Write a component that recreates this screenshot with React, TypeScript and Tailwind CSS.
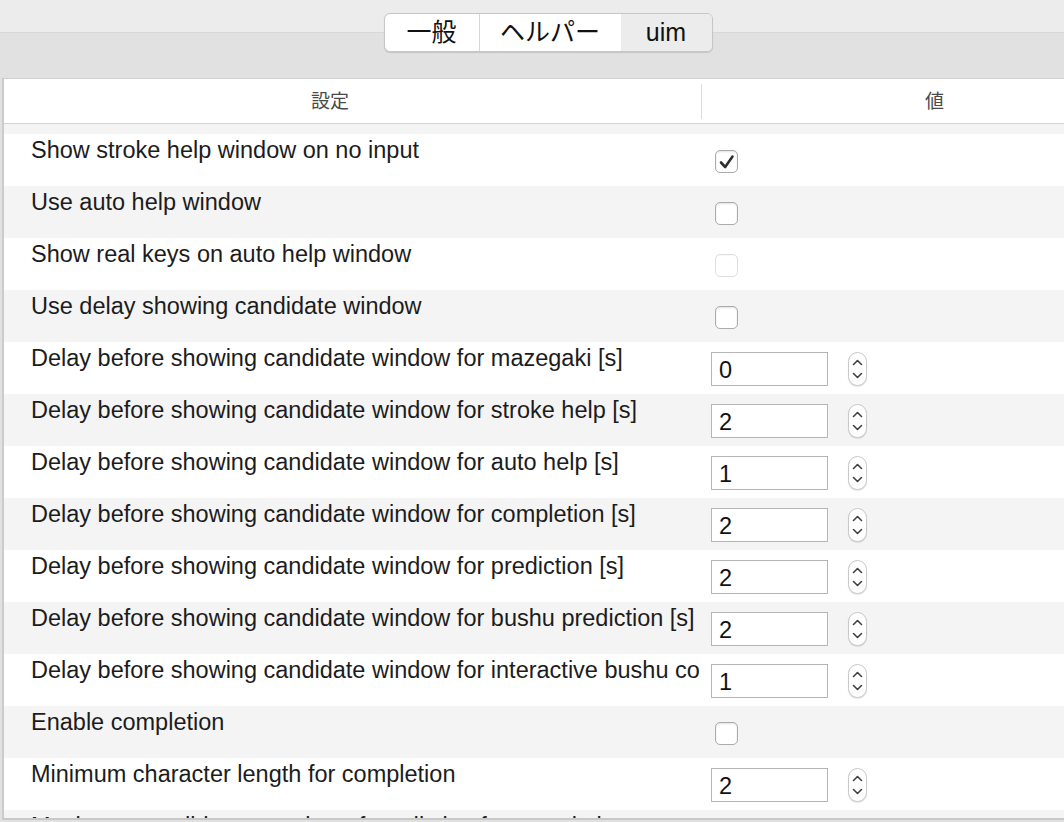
import React from "react";

type Row =
  | { label: string; kind: "check"; checked?: boolean; disabled?: boolean }
  | { label: string; kind: "num"; value: string };

const rows: Row[] = [
  { label: "Show stroke help window on no input", kind: "check", checked: true },
  { label: "Use auto help window", kind: "check" },
  { label: "Show real keys on auto help window", kind: "check", disabled: true },
  { label: "Use delay showing candidate window", kind: "check" },
  { label: "Delay before showing candidate window for mazegaki [s]", kind: "num", value: "0" },
  { label: "Delay before showing candidate window for stroke help [s]", kind: "num", value: "2" },
  { label: "Delay before showing candidate window for auto help [s]", kind: "num", value: "1" },
  { label: "Delay before showing candidate window for completion [s]", kind: "num", value: "2" },
  { label: "Delay before showing candidate window for prediction [s]", kind: "num", value: "2" },
  { label: "Delay before showing candidate window for bushu prediction [s]", kind: "num", value: "2" },
  { label: "Delay before showing candidate window for interactive bushu conversion [s]", kind: "num", value: "1" },
  { label: "Enable completion", kind: "check" },
  { label: "Minimum character length for completion", kind: "num", value: "2" },
  { label: "Maximum candidates number of prediction for completion", kind: "num", value: "5" },
];

function Checkbox({ checked, disabled }: { checked?: boolean; disabled?: boolean }) {
  return (
    <div
      className={
        "ml-[14px] mt-[16px] w-[23px] h-[23px] rounded-[5px] bg-white border " +
        (disabled
          ? "border-[#dedede] shadow-[inset_0_1px_1px_rgba(0,0,0,0.03)]"
          : "border-[#ababab] shadow-[inset_0_1px_2px_rgba(0,0,0,0.12)]")
      }
    >
      {checked && (
        <svg width="21" height="21" viewBox="0 0 21 21" className="block">
          <path d="M5 11.5 L9.2 16 L16.5 5.5" fill="none" stroke="#2e2e2e" strokeWidth="2.6" strokeLinecap="round" strokeLinejoin="round" />
        </svg>
      )}
    </div>
  );
}

function NumField({ value }: { value: string }) {
  return (
    <div className="ml-[10px] mt-[10px] flex items-center">
      <div className="w-[117px] h-[34px] border border-[#b5b5b5] bg-white pl-[7px] pt-[4px] text-[23.5px] leading-[27px] text-[#111]">
        {value}
      </div>
      <div className="ml-[20px] w-[19px] h-[34px] rounded-full border border-[#c9c9c9] bg-white shadow-[0_1px_1px_rgba(0,0,0,0.12)] flex flex-col items-center justify-between py-[6px]">
        <svg width="11" height="7" viewBox="0 0 11 7" className="block">
          <path d="M1.5 5.5 L5.5 1.5 L9.5 5.5" fill="none" stroke="#404040" strokeWidth="1.6" strokeLinecap="round" strokeLinejoin="round" />
        </svg>
        <svg width="11" height="7" viewBox="0 0 11 7" className="block">
          <path d="M1.5 1.5 L5.5 5.5 L9.5 1.5" fill="none" stroke="#404040" strokeWidth="1.6" strokeLinecap="round" strokeLinejoin="round" />
        </svg>
      </div>
    </div>
  );
}

export default function App() {
  return (
    <div className="w-[1064px] h-[822px] overflow-hidden bg-[#e1e1e1] font-['Liberation_Sans','Noto_Sans_CJK_JP',sans-serif]">
      {/* toolbar */}
      <div className="h-[78px] bg-[linear-gradient(to_bottom,#ececec_0px,#ececec_32px,#d7d7d7_32px,#d7d7d7_33px,#e1e1e1_33px)] pt-[13px] flex justify-center">
        <div className="h-[39px] ml-[32px] flex rounded-[6px] border border-[#c6c6c6] bg-white shadow-[0_1px_1px_rgba(0,0,0,0.13)] overflow-hidden text-[25px] text-[#111] leading-none">
          <div className="w-[95px] flex items-center justify-center border-r border-[#d6d6d6]">一般</div>
          <div className="w-[141px] flex items-center justify-center">ヘルパー</div>
          <div className="w-[91px] flex items-center justify-center bg-[#ececec]">uim</div>
        </div>
      </div>
      {/* table */}
      <div className="ml-[2px] flex flex-col border-l-2 border-l-[#cbcbcb]">
        <div className="h-px bg-[#d2d2d2]" />
        <div className="h-[739px] bg-white overflow-hidden">
          <div className="h-[45px] flex items-center text-[19px] leading-none text-[#4a4a4a] border-b border-[#d3d3d3]">
            <div className="w-[697px] pl-[307px]">設定</div>
            <div className="w-px h-[35px] bg-[#dedede]" />
            <div className="pl-[223px]">値</div>
          </div>
          <div className="h-[10px] bg-[#f4f4f4]" />
          {rows.map((r, i) => (
            <div key={i} className={"h-[52px] flex " + (i % 2 === 0 ? "bg-white" : "bg-[#f4f4f4]")}>
              <div className="w-[697px] pl-[27px] pt-[3px] pr-[2px]">
                <div className="overflow-hidden whitespace-nowrap text-[23.5px] leading-[27px] text-[#1c1c1c]">{r.label}</div>
              </div>
              <div className="flex-1">
                {r.kind === "check" ? (
                  <Checkbox checked={r.checked} disabled={r.disabled} />
                ) : (
                  <NumField value={r.value} />
                )}
              </div>
            </div>
          ))}
        </div>
        <div className="h-[2px] bg-[#c8c8c8]" />
      </div>
    </div>
  );
}
